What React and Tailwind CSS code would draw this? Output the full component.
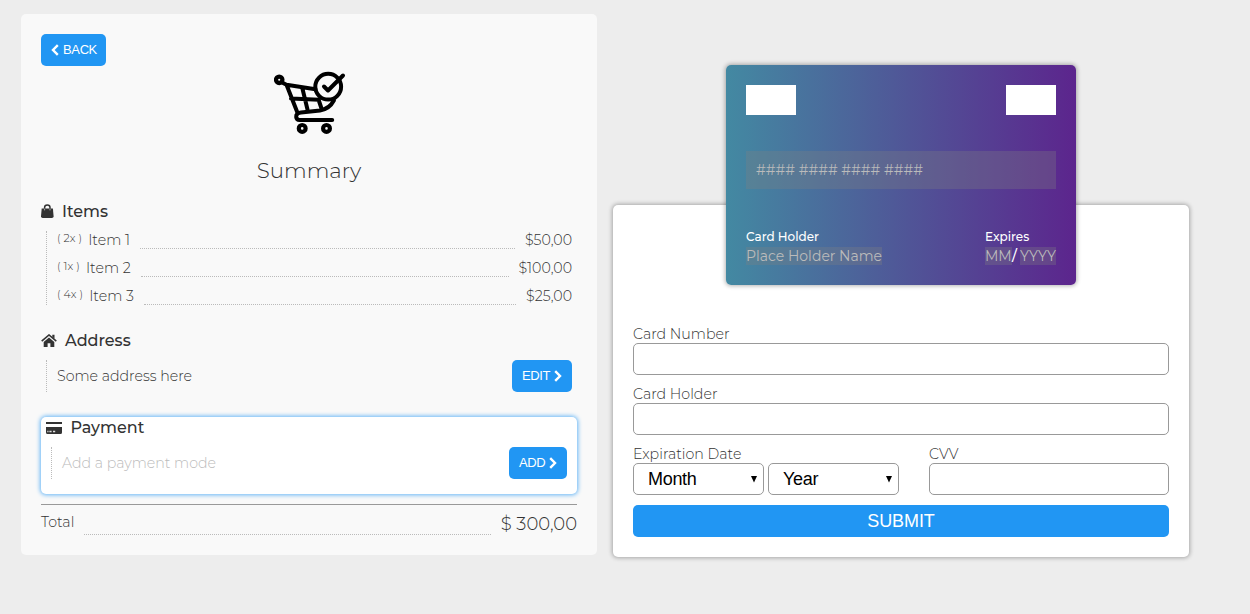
import React from "react";

const Chevron = ({ left }) => (
  <svg width="8" height="12" viewBox="0 0 8 12" fill="none" stroke="#fff" strokeWidth="2.4">
    <path d={left ? "M6.8 1.2 2 6l4.8 4.8" : "M1.2 1.2 6 6l-4.8 4.8"} />
  </svg>
);

const BagIcon = () => (
  <svg width="13" height="14" viewBox="0 0 13 14">
    <path d="M3.600 5V3.400a2.700 2.500 0 0 1 5.400 0V5" fill="none" stroke="#333" strokeWidth="1.500" />
    <path d="M.7 4.400h11.200L12.600 12.300Q12.600 14 10.900 14H1.700Q0 14 0 12.300Z" fill="#333" />
    <path d="M3.600 4.600v1.800M9 4.600v1.800" stroke="#aaa" strokeWidth="1" />
  </svg>
);

const HomeIcon = () => (
  <svg width="16" height="13" viewBox="0 0 16 13">
    <path d="M.7 7.200 8 1l7.300 6.200" fill="none" stroke="#333" strokeWidth="1.600" />
    <path d="M11.300.8h2.200v4l-2.200-1.900Z" fill="#333" />
    <path d="M8 3.400 13.300 8v5H9.400V9.200H6.600V13H2.700V8Z" fill="#333" />
  </svg>
);

const CardIcon = () => (
  <svg width="16" height="12" viewBox="0 0 16 12" className="mt-px">
    <path d="M0 0h16v2H0zM0 5h16v5.500Q16 12 14.500 12h-13Q0 12 0 10.500Z" fill="#333" />
    <path d="M1.300 8.800h1.200v1.500H1.300zM3.400 8.800h2.200v1.500H3.400zM7 8.800h2.200v1.500H7z" fill="#ddd" />
  </svg>
);

const CartIcon = () => (
  <svg width="72" height="64" viewBox="0 0 72 64" fill="none" stroke="#000" strokeWidth="4" strokeLinecap="round" strokeLinejoin="round" className="ml-[2px]">
    <circle cx="5.200" cy="8.800" r="3.200" strokeWidth="4.300" />
    <path d="M8.500 11.800 12.500 13.800 41.500 18.300M12.500 13.800 23.200 41M28.300 17 33.500 38.500M17 27.600 45 28.800M44.500 28.500 47.500 37.500" />
    <path d="M60 29.300C57 35 52.500 38.500 46 39.500L27 41.500C23.500 42 22 43.500 22.200 46 22.400 48 23.500 48.900 25.500 48.900H58.200" />
    <circle cx="54.200" cy="15.700" r="12.900" />
    <path d="M50 15.500 54 19.500 69 4.500" />
    <circle cx="28.200" cy="57.400" r="3.400" strokeWidth="4.200" />
    <circle cx="52.500" cy="57.400" r="3.400" strokeWidth="4.200" />
  </svg>
);

const Button = ({ children, className }) => (
  <button className={"flex h-8 shrink-0 items-center justify-center gap-1 rounded-[5px] bg-[#2196f3] font-['Liberation_Sans'] text-[13px] font-normal tracking-[-0.4px] text-white " + className}>
    {children}
  </button>
);

const Heading = ({ icon, children, className }) => (
  <h2 className={"flex h-5 items-center text-[16px] font-medium leading-5 " + className}>
    {icon}
    <span className="pt-[2px]">{children}</span>
  </h2>
);

const Item = ({ qty, name, price }) => (
  <li className="flex h-7 items-start">
    <span className="text-[11px] leading-[14px] tracking-[0.1px]">( {qty}x )</span>
    <span className="ml-[6px] leading-[18px]">{name}</span>
    <span className="mx-[10px] h-[18px] flex-1 border-b border-dotted border-[#bbb]" />
    <span className="leading-[18px]">{price}</span>
  </li>
);

const Field = ({ label, className, children }) => (
  <div className={className}>
    <label className="block h-[19px] leading-[21px]">{label}</label>
    {children || <input className="block h-8 w-full rounded-[5px] border border-[#999] bg-white" />}
  </div>
);

const Select = ({ value }) => (
  <div className="flex h-8 w-[131px] items-center justify-between rounded-[5px] border border-[#999] bg-white pl-[14px] pr-[6px] font-['Liberation_Sans'] text-[18px] font-normal tracking-[-0.3px] text-black">
    {value}
    <svg width="6" height="7" viewBox="0 0 6 7">
      <path d="M0 0h6L3 6.500Z" fill="#000" />
    </svg>
  </div>
);

export default function App() {
  return (
    <div className="flex h-[614px] w-[1250px] items-start overflow-hidden whitespace-nowrap bg-[#ededed] pl-[21px] pt-[14px] font-['Montserrat','Inter',sans-serif] text-[14.2px] font-light text-[#333]">
      <section className="h-[541px] w-[576px] shrink-0 rounded-[5px] bg-[#f9f9f9] px-5 pt-5">
        <Button className="w-[65px] pl-px">
          <Chevron left />
          BACK
        </Button>
        <div className="mt-[5px] flex h-[64px] justify-center">
          <CartIcon />
        </div>
        <h1 className="mt-[21px] text-center text-[21.3px] leading-7">Summary</h1>

        <Heading className="mt-[17px] gap-[8px]" icon={<BagIcon />}>Items</Heading>
        <ul className="ml-[5px] mr-[5px] mt-[10px] h-[74px] border-l border-dotted border-[#bbb] pl-[10px]">
          <Item qty="2" name="Item 1" price="$50,00" />
          <Item qty="1" name="Item 2" price="$100,00" />
          <Item qty="4" name="Item 3" price="$25,00" />
        </ul>

        <Heading className="mt-[25px] gap-[8px]" icon={<HomeIcon />}>Address</Heading>
        <div className="mx-[5px] mt-[10px] flex h-8 items-center justify-between border-l border-dotted border-[#bbb] pl-[10px]">
          <span className="pt-[2px]">Some address here</span>
          <Button className="w-[60px]">
            EDIT
            <Chevron />
          </Button>
        </div>

        <div className="mt-[25px] h-[77px] rounded-[5px] bg-white px-[5px] shadow-[0_0_4px_1px_#64b5f6]">
          <Heading className="gap-[8.500px]" icon={<CardIcon />}>Payment</Heading>
          <div className="mx-[5px] mt-[10px] flex h-8 items-center justify-between border-l border-dotted border-[#bbb] pl-[10px]">
            <span className="pt-[2px] text-[#bbb]">Add a payment mode</span>
            <Button className="w-[58px]">
              ADD
              <Chevron />
            </Button>
          </div>
        </div>

        <div className="mt-[10px] flex h-[31px] items-start border-t border-[#999]">
          <span className="mt-[7px] leading-5">Total</span>
          <span className="mx-[10px] h-[30px] flex-1 border-b border-dotted border-[#bbb]" />
          <span className="mt-[8px] text-[18px] leading-[22px]">$ 300,00</span>
        </div>
      </section>

      <section className="ml-4 mt-[191px] flex h-[352px] w-[576px] shrink-0 flex-col rounded-[5px] bg-white px-5 shadow-[0_0_4px_1px_rgba(0,0,0,0.3)]">
        <div className="-mt-[140px] flex h-[220px] w-[350px] flex-col self-center rounded-[5px] bg-[linear-gradient(to_right,#4389a2,#5c258d)] p-5 text-[14px] font-normal text-white shadow-[0_0_4px_1px_rgba(0,0,0,0.3)]">
          <div className="flex justify-between">
            <div className="h-[30px] w-[50px] bg-white" />
            <div className="h-[30px] w-[50px] bg-white" />
          </div>
          <div className="mt-9 h-[38px] bg-[#808080]/30 px-[10px] leading-[38px] text-[#bbb]">#### #### #### ####</div>
          <div className="mt-[39px] flex justify-between">
            <div>
              <div className="h-[19px] text-[12px] font-medium leading-[18px]">Card Holder</div>
              <div className="h-[18px] bg-[#808080]/30 leading-[18px] text-[#bbb]">Place Holder Name</div>
            </div>
            <div className="w-[71px]">
              <div className="h-[19px] text-[12px] font-medium leading-[18px]">Expires</div>
              <div className="flex leading-[18px] text-[#bbb]">
                <span className="w-[27px] bg-[#808080]/30">MM</span>
                <span className="w-[8px] font-medium text-white">/</span>
                <span className="w-[36px] bg-[#808080]/30 tracking-[-0.4px]">YYYY</span>
              </div>
            </div>
          </div>
        </div>
        <Field label="Card Number" className="mt-[39px]" />
        <Field label="Card Holder" className="mt-[9px]" />
        <div className="mt-[9px] flex justify-between">
          <Field label="Expiration Date">
            <div className="flex gap-1">
              <Select value="Month" />
              <Select value="Year" />
            </div>
          </Field>
          <Field label="CVV" className="w-[240px]" />
        </div>
        <button className="mt-[10px] h-8 shrink-0 rounded-[5px] bg-[#2196f3] font-['Liberation_Sans'] text-[18px] font-normal leading-8 tracking-[-0.1px] text-white">SUBMIT</button>
      </section>
    </div>
  );
}
